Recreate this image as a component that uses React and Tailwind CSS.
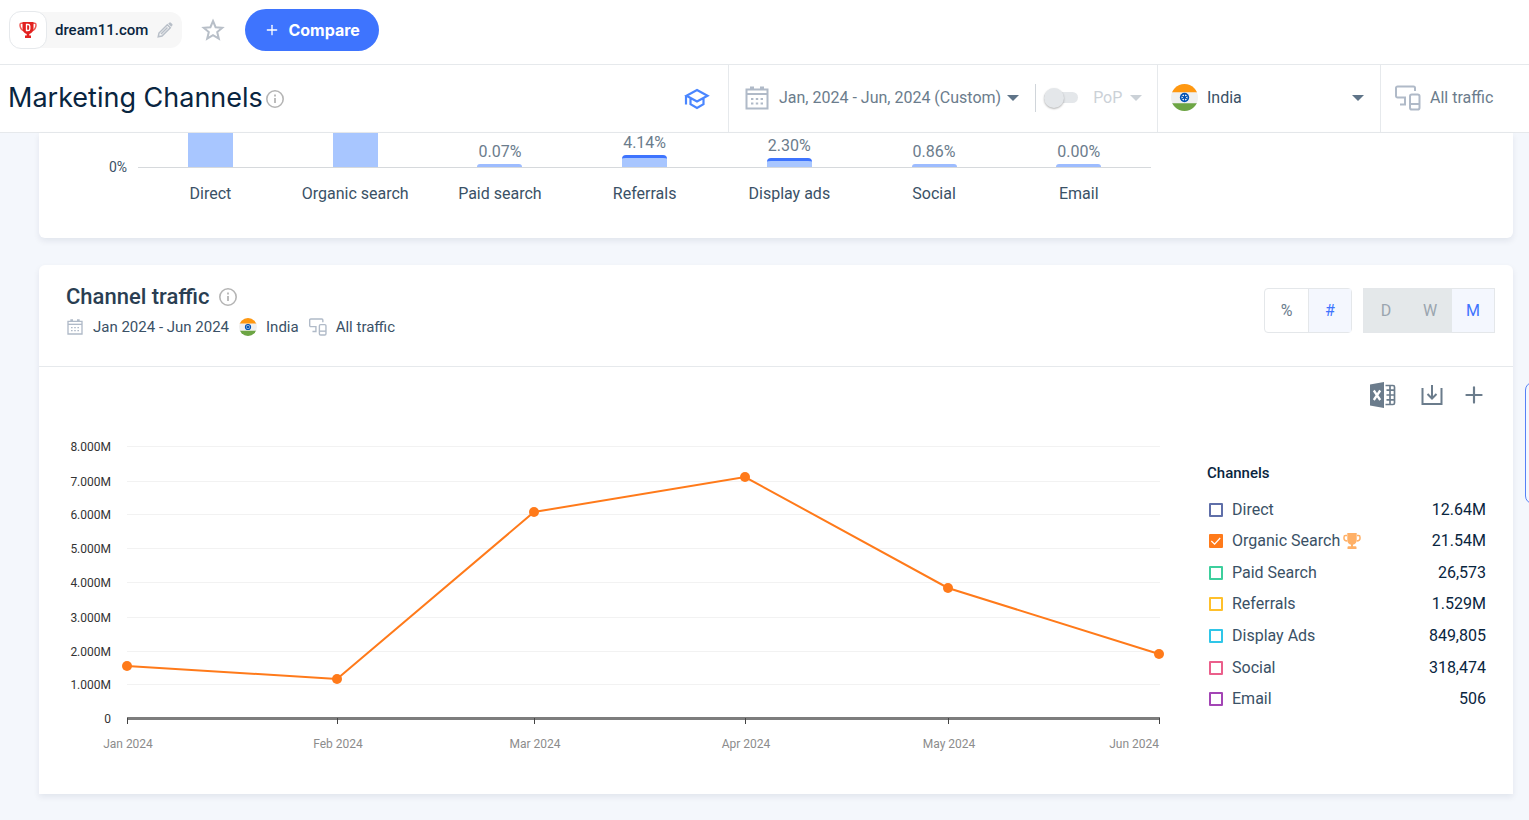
import React, { useState } from 'react';
import { Plus } from 'lucide-react';

const CHANNEL_SHARE = [
  { name: 'Direct', bar: 34, full: true },
  { name: 'Organic search', bar: 34, full: true },
  { name: 'Paid search', value: '0.07%', bar: 3 },
  { name: 'Referrals', value: '4.14%', bar: 12, cap: true },
  { name: 'Display ads', value: '2.30%', bar: 9, cap: true },
  { name: 'Social', value: '0.86%', bar: 3 },
  { name: 'Email', value: '0.00%', bar: 3 },
];

const CHANNELS = [
  { name: 'Direct', total: '12.64M', color: 'border-[#5f6fa9] checked:bg-[#5f6fa9]' },
  { name: 'Organic Search', total: '21.54M', color: 'border-[#ff7a1a] checked:bg-[#ff7a1a]', winner: true },
  { name: 'Paid Search', total: '26,573', color: 'border-[#3dcf9d] checked:bg-[#3dcf9d]' },
  { name: 'Referrals', total: '1.529M', color: 'border-[#ffc02b] checked:bg-[#ffc02b]' },
  { name: 'Display Ads', total: '849,805', color: 'border-[#2fc6e8] checked:bg-[#2fc6e8]' },
  { name: 'Social', total: '318,474', color: 'border-[#eb5f8b] checked:bg-[#eb5f8b]' },
  { name: 'Email', total: '506', color: 'border-[#a345b5] checked:bg-[#a345b5]' },
];

const Y_TICKS = [
  { y: 16, label: '8.000M' },
  { y: 51, label: '7.000M' },
  { y: 84, label: '6.000M' },
  { y: 118, label: '5.000M' },
  { y: 152, label: '4.000M' },
  { y: 187, label: '3.000M' },
  { y: 221, label: '2.000M' },
  { y: 254, label: '1.000M' },
];

const POINTS = [
  { x: 61, y: 236, label: 'Jan 2024' },
  { x: 271, y: 249, label: 'Feb 2024' },
  { x: 468, y: 82, label: 'Mar 2024' },
  { x: 679, y: 47, label: 'Apr 2024' },
  { x: 882, y: 158, label: 'May 2024' },
  { x: 1093, y: 224, label: 'Jun 2024' },
];

const InfoIcon = () => (
  <svg className="w-5 h-5 text-[#b5b5b5]" viewBox="0 0 20 20" fill="none" stroke="currentColor">
    <circle cx="10" cy="10" r="8.200" strokeWidth="1.600" />
    <path d="M10 9v5" strokeWidth="1.800" />
    <path d="M10 5.600v1.800" strokeWidth="1.800" />
  </svg>
);

const CalendarIcon = ({ className }) => (
  <svg className={className} viewBox="0 0 24 24" fill="none" stroke="currentColor">
    <path d="M1.500 3.500h21v19h-21z" strokeWidth="2" />
    <path d="M1.500 8h21" strokeWidth="2" />
    <path d="M5 0.500h4v3H5zM15 0.500h4v3h-4z" fill="currentColor" stroke="none" />
    <path d="M6 13h2.400M10.800 13h2.400M15.600 13H18M6 17.500h2.400M10.800 17.500h2.400M15.600 17.500H18" strokeWidth="2" />
  </svg>
);

const DevicesIcon = ({ className }) => (
  <svg className={className} viewBox="0 0 26 26" fill="none" stroke="currentColor" strokeWidth="2">
    <path d="M20 6V3a1.500 1.500 0 0 0-1.500-1.500h-16A1.500 1.500 0 0 0 1 3v8a1.500 1.500 0 0 0 1.500 1.500H10V19.500M5 19.500h6" />
    <rect x="15" y="9.500" width="9.500" height="15" rx="1.800" />
    <path d="M15 19h9.500" />
  </svg>
);

const IndiaFlag = ({ className }) => (
  <svg className={className} viewBox="0 0 26 26">
    <clipPath id="flag"><circle cx="13" cy="13" r="13" /></clipPath>
    <g clipPath="url(#flag)">
      <path fill="#f0f0f0" d="M0 0h26v26H0z" />
      <path fill="#ff9811" d="M0 0h26v8H0z" />
      <path fill="#6da544" d="M0 18.500h26V26H0z" />
    </g>
    <circle cx="13" cy="13" r="4.500" fill="#0052b4" />
    <circle cx="13" cy="13" r="2.900" fill="#f0f0f0" />
    <path d="M13 9.500v7M10 11.250l6 3.500M10 14.750l6-3.500" stroke="#0052b4" strokeWidth="1" />
    <circle cx="13" cy="13" r="1.400" fill="#0052b4" />
  </svg>
);

const Caret = ({ className }) => (
  <svg className={className} viewBox="0 0 12 6" fill="currentColor"><path d="M0 0h12L6 6z" /></svg>
);

const TrophyIcon = () => (
  <svg className="w-[18px] h-[18px] text-[#ffb066]" viewBox="0 0 18 18" fill="currentColor">
    <path d="M4.300 1h9.400v7c0 2.800-1.700 4.500-3.700 4.800V15H8v-2.200C6 12.500 4.300 10.800 4.300 8z" />
    <path d="M4.500 15.200a1 1 0 0 1 1-.900h7a1 1 0 0 1 1 .9V17h-9z" />
    <path d="M4 3.600H2.500Q1 3.600 1 5.200v1.200Q1 8.600 4.300 9M14 3.600h1.500q1.500 0 1.500 1.600v1.200Q17 8.600 13.700 9" fill="none" stroke="currentColor" strokeWidth="1.500" />
  </svg>
);

const SiteLogo = () => (
  <svg className="w-[18px] h-[18px]" viewBox="0 0 18 18">
    <path d="M4 2.200H2Q1 2.200 1 4q0 4.500 4.500 6M14 2.200h2q1 0 1 1.800 0 4.500-4.500 6" fill="none" stroke="#ee5a55" strokeWidth="1.500" />
    <path d="M3.500 1h11v6c0 3.200-1.800 5.500-4.200 6v1.500h1.700V17H6v-2.500h1.700V13C5.300 12.500 3.500 10.200 3.500 7z" fill="#e2211f" />
    <path d="M7.500 3.500h1.500c1.200 0 1.800.600 1.800 1.600v2.800c0 1-.6 1.600-1.800 1.600H7.500z" fill="none" stroke="#fff" strokeWidth="1.300" />
  </svg>
);

const ExcelIcon = () => (
  <svg className="w-[26px] h-[26px]" viewBox="0 0 26 26" fill="none">
    <path d="M0 2.500L14 0v26L0 23.500z" fill="#6b7c8c" />
    <path d="M3.800 8.500l6.400 9.500M10.200 8.500L3.800 18" stroke="#fff" strokeWidth="2.300" />
    <path d="M15.500 3.500H23a1.500 1.500 0 0 1 1.500 1.500v16a1.500 1.500 0 0 1-1.500 1.500h-7.500M16.500 8.200h8M16.500 13h8M16.500 17.800h8M20 3.500v19" stroke="#6b7c8c" strokeWidth="1.700" />
  </svg>
);

function ShareChart() {
  return (
    <section className="bg-white rounded-b-md shadow-[0_3px_6px_rgba(14,30,62,0.08)] pl-[70px] pr-4 pb-[34px]">
      <div className="flex gap-[11px]">
        <span className="mt-[26px] h-4 leading-4 text-sm text-[#3a5166]">0%</span>
        <div className="flex-1 max-w-[1013px]">
          <div className="grid grid-cols-7 h-[35px] border-b border-[#d6d9dc]">
            {CHANNEL_SHARE.map((c) => (
              <div key={c.name} className="flex flex-col items-center justify-end">
                {c.value && <span className="text-base leading-5 mb-0.5 text-[#6b7c8c]">{c.value}</span>}
                <div
                  className={`w-[45px] shrink-0 ${c.full ? 'bg-[#a8c6ff]' : c.cap ? 'bg-[#a8c6ff] rounded-t-sm border-t-[3px] border-[#3e74fe]' : 'bg-[#9dbcff] rounded-t-sm'}`}
                  style={{ height: c.bar }}
                />
              </div>
            ))}
          </div>
          <div className="grid grid-cols-7 pt-4 text-base leading-5 text-center text-[#3a5166]">
            {CHANNEL_SHARE.map((c) => <span key={c.name}>{c.name}</span>)}
          </div>
        </div>
      </div>
    </section>
  );
}

function TrafficChart() {
  return (
    <svg className="flex-1 min-w-0 h-auto" viewBox="0 0 1105 330" role="img" aria-label="Channel traffic">
      {Y_TICKS.map((t) => (
        <g key={t.label}>
          <path d={`M61 ${t.y + 0.5}H1094`} stroke="#f2f2f2" />
          <text x="45" y={t.y + 5} textAnchor="end" fontSize="12" fill="#333333">{t.label}</text>
        </g>
      ))}
      <text x="45" y="293" textAnchor="end" fontSize="12" fill="#333333">0</text>
      <path d="M61 288.500H1094" stroke="#7d7d7d" strokeWidth="3" />
      {POINTS.map((p, i) => {
        const last = i === POINTS.length - 1;
        return (
          <g key={p.label}>
            <path d={`M${p.x + 0.5} 288v6`} stroke="#444444" />
            <text x={last ? 1093 : p.x + 1} y="318" textAnchor={last ? 'end' : 'middle'} fontSize="12" fill="#8c8c8c">{p.label}</text>
          </g>
        );
      })}
      <polyline points={POINTS.map((p) => `${p.x},${p.y}`).join(' ')} fill="none" stroke="#ff7a1a" strokeWidth="2" />
      {POINTS.map((p) => <circle key={p.label} cx={p.x} cy={p.y} r="5" fill="#ff7a1a" />)}
    </svg>
  );
}

export default function App() {
  const [selected, setSelected] = useState(['Organic Search']);

  const toggle = (name) => {
    setSelected(selected.includes(name) ? selected.filter((n) => n !== name) : [...selected, name]);
  };

  return (
    <div className="min-h-screen bg-[#f4f7fc] font-['Roboto',sans-serif] text-[#092540] overflow-x-hidden">
      <header className="bg-white">
        {/* Site bar */}
        <div className="flex items-center h-[65px] pl-[9px] pb-1 border-b border-[#e6e9ec]">
          <div className="flex items-center h-9 rounded-xl bg-[#f7f7f7] pr-2">
            <span className="flex items-center justify-center w-[38px] h-[38px] rounded-xl bg-white border border-[#e6e9ec]"><SiteLogo /></span>
            <span className="ml-2 text-[15px] font-medium">dream11.com</span>
            <button aria-label="Edit site" className="ml-2 text-[#b8bfc8]">
              <svg className="w-[18px] h-[18px]" viewBox="0 0 18 18" fill="none" stroke="currentColor" strokeWidth="1.500">
                <path d="M2.200 15.800l.8-3.800 8.300-8.300 3 3L6 15zM5 13l6.500-6.500" />
                <path d="M12.200 2.800l1-1a1.200 1.200 0 0 1 1.700 0l1.300 1.300a1.200 1.200 0 0 1 0 1.700l-1 1z" fill="currentColor" stroke="none" />
              </svg>
            </button>
          </div>
          <button aria-label="Add to favorites" className="ml-[19px] text-[#b8bfc8]">
            <svg className="w-6 h-6" viewBox="0 0 24 24" fill="none" stroke="currentColor" strokeWidth="2">
              <path d="M12 3l2.600 6.200 6.700.5-5.100 4.400 1.600 6.500L12 17.100l-5.800 3.500 1.600-6.500-5.100-4.400 6.700-.5z" />
            </svg>
          </button>
          <button className="ml-5 flex items-center gap-2 h-[42px] px-[19px] rounded-full bg-[#3e74fe] text-white font-['Inter',sans-serif] font-bold text-base">
            <Plus size={16} strokeWidth={2} /> Compare
          </button>
        </div>

        {/* Page title and filters */}
        <div className="flex h-[68px] border-b border-[#e6e9ec]">
          <div className="flex-1 flex items-center pl-2 pr-[18px]">
            <h1 className="font-['Inter',sans-serif] text-[27px] mr-0.5 whitespace-nowrap">Marketing Channels</h1>
            <InfoIcon />
            <a href="#academy" aria-label="Academy" className="ml-auto text-[#4a86ff]">
              <svg className="w-[26px] h-[22px]" viewBox="0 0 26 22" fill="none" stroke="currentColor" strokeWidth="2.200">
                <path d="M13 2l10.500 5.700L13 13.400 2.500 7.700zM6.500 10v6.200L13 20l6.500-3.800V10M2 7.500v9" />
              </svg>
            </a>
          </div>
          <div className="flex items-center w-[429px] pl-4 pb-0.5 border-l border-[#e6e9ec] text-[#6b7c8c]">
            <button className="flex items-center text-base whitespace-nowrap">
              <CalendarIcon className="w-6 h-6 mr-2.5 text-[#b0bac8]" />
              Jan, 2024 - Jun, 2024 (Custom)
              <Caret className="w-3 h-1.5 ml-1.5 text-[#5f7488]" />
            </button>
            <span className="h-7 ml-4 border-l border-[#d0d5da]" />
            <label className="ml-2 flex items-center text-base text-[#cbd1d7]">
              <input type="checkbox" className="peer sr-only" />
              <span className="flex items-center w-[34px] h-[11px] rounded-full bg-[#e4e7ea]">
                <span className="w-5 h-5 rounded-full bg-[#e4e7ea] shadow-[0_1px_2px_rgba(0,0,0,0.3)]" />
              </span>
              <span className="ml-[15px]">PoP</span>
            </label>
            <button aria-label="Comparison period"><Caret className="w-3 h-1.5 ml-2 text-[#cbd1d7]" /></button>
          </div>
          <div className="relative flex items-center w-[223px] pl-[13px] pb-0.5 border-l border-[#e6e9ec] text-[#3a5166]">
            <IndiaFlag className="w-[27px] h-[27px] shrink-0" />
            <select aria-label="Country" className="appearance-none flex-1 h-full pl-[9px] text-base bg-transparent">
              <option>India</option>
              <option>Worldwide</option>
            </select>
            <Caret className="absolute right-4 w-3 h-1.5 text-[#5f7488] pointer-events-none" />
          </div>
          <button className="flex items-center w-[149px] pl-3.5 pb-0.5 border-l border-[#e6e9ec] text-base text-[#6b7c8c]">
            <DevicesIcon className="w-[26px] h-[26px] mr-[9px] text-[#b0bac8]" /> All traffic
          </button>
        </div>
      </header>

      <main className="pl-[39px] pr-4 pb-6">
        <ShareChart />

        <section className="mt-[27px] bg-white rounded-t-md shadow-[0_3px_6px_rgba(14,30,62,0.08)]">
          <div className="flex justify-between h-[102px] pl-[27px] pr-[18px] border-b border-[#e6e9ec]">
            <div className="pt-[18px]">
              <h2 className="flex items-center gap-2 text-[22px] leading-7 font-medium text-[#2a3e52]">Channel traffic <InfoIcon /></h2>
              <div className="mt-1.5 flex items-center text-[15px] leading-5 text-[#3a5166]">
                <CalendarIcon className="w-[18px] h-4 mr-[9px] text-[#b0bac8]" /> Jan 2024 - Jun 2024
                <IndiaFlag className="w-[18px] h-[18px] ml-2.5 mr-[9px]" /> India
                <DevicesIcon className="w-[18px] h-[18px] ml-2.5 mr-[9px] text-[#b0bac8]" /> All traffic
              </div>
            </div>
            <div className="flex gap-[11px] pt-[23px] text-base text-[#6b7c8c]">
              <div className="flex h-[45px] border border-[#e4e7ea] rounded">
                <button className="w-[43px]">%</button>
                <button className="w-[43px] border-l border-[#e4e7ea] bg-[#f4f7fe] text-[#3e74fe]">#</button>
              </div>
              <div className="flex h-[45px] border border-[#e4e7ea] bg-[#e4e8ea] text-[#9aa5af]">
                <button className="w-11" disabled>D</button>
                <button className="w-11" disabled>W</button>
                <button className="w-[42px] bg-[#f4f7fe] text-[#3e74fe]">M</button>
              </div>
            </div>
          </div>

          <div className="flex items-center justify-end h-[63px] pr-[26px] pb-2 text-[#6b7c8c]">
            <button aria-label="Export to Excel"><ExcelIcon /></button>
            <button aria-label="Download" className="ml-[25px]">
              <svg className="w-[22px] h-[22px]" viewBox="0 0 22 22" fill="none" stroke="currentColor" strokeWidth="2">
                <path d="M1.500 4v16h19V4M11 1v13M6.500 10l4.500 4.500 4.500-4.500" />
              </svg>
            </button>
            <button aria-label="Add to dashboard" className="ml-[18px]"><Plus size={26} strokeWidth={2} /></button>
          </div>

          <div className="flex items-start gap-9 px-[27px] pb-[34px]">
            <TrafficChart />
            <div className="w-[279px] pt-[33px]">
              <h3 className="text-[15px] leading-5 font-medium">Channels</h3>
              <ul className="mt-[11px] grid grid-rows-7 h-[221px]">
                {CHANNELS.map((c) => (
                  <li key={c.name} className="flex items-center justify-between text-base leading-5">
                    <label className="flex items-center text-[#3a5166]">
                      <span className="relative flex ml-0.5 mr-[9px]">
                        <input
                          type="checkbox"
                          checked={selected.includes(c.name)}
                          onChange={() => toggle(c.name)}
                          className={`peer appearance-none w-3.5 h-3.5 border-2 rounded-[1px] ${c.color}`}
                        />
                        <svg className="absolute inset-0 hidden peer-checked:block pointer-events-none" viewBox="0 0 15 15" fill="none" stroke="#fff" strokeWidth="1.300">
                          <path d="M2.500 7.500l3.500 3.300 6-6.500" />
                        </svg>
                      </span>
                      {c.name}
                      {c.winner && <span className="ml-[3px]"><TrophyIcon /></span>}
                    </label>
                    <span>{c.total}</span>
                  </li>
                ))}
              </ul>
            </div>
          </div>
        </section>
      </main>

      {/* Feedback tab */}
      <button aria-label="Feedback" className="fixed top-[382px] -right-2 w-3 h-[122px] rounded-l-lg border border-[#5580f7] bg-[#f4f7fe]" />
    </div>
  );
}
